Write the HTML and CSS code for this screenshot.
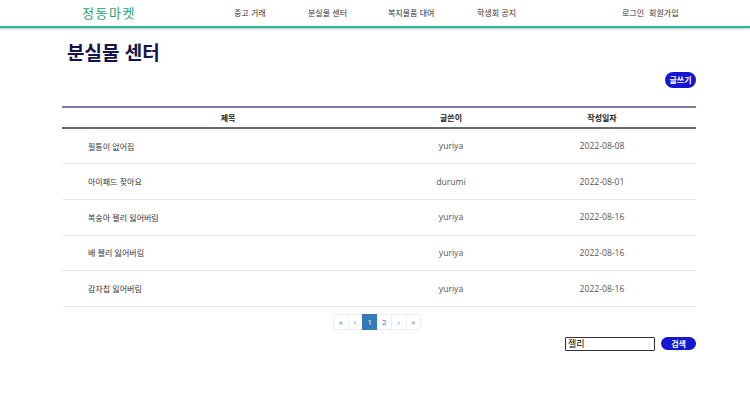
FILE: index.html
```html
<!DOCTYPE html>
<html lang="ko">
<head>
<meta charset="utf-8">
<link rel="stylesheet" href="styles.css">
</head>
<body>
<header class="header">
  <div class="logo">정동마켓</div>
  <nav class="nav">
    <a>중고 거래</a>
    <a>분실물 센터</a>
    <a>복지물품 대여</a>
    <a>학생회 공지</a>
  </nav>
  <div class="auth"><a>로그인</a><a>회원가입</a></div>
</header>
<main class="main">
  <h1 class="title">분실물 센터</h1>
  <div class="toolbar"><button class="btn write">글쓰기</button></div>
  <table class="board">
    <thead>
      <tr><th class="c-title">제목</th><th class="c-author">글쓴이</th><th class="c-date">작성일자</th></tr>
    </thead>
    <tbody>
      <tr><td class="t">필통이 없어짐</td><td>yuriya</td><td>2022-08-08</td></tr>
      <tr><td class="t">아이패드 찾아요</td><td>durumi</td><td>2022-08-01</td></tr>
      <tr><td class="t">복숭아 젤리 잃어버림</td><td>yuriya</td><td>2022-08-16</td></tr>
      <tr><td class="t">배 젤리 잃어버림</td><td>yuriya</td><td>2022-08-16</td></tr>
      <tr><td class="t">감자칩 잃어버림</td><td>yuriya</td><td>2022-08-16</td></tr>
    </tbody>
  </table>
  <div class="pager">
    <span class="pg">«</span><span class="pg">‹</span><span class="pg active">1</span><span class="pg">2</span><span class="pg">›</span><span class="pg">»</span>
  </div>
  <div class="search">
    <input class="search-input" type="text" value="젤리">
    <button class="btn search-btn">검색</button>
  </div>
</main>
</body>
</html>
```
FILE: styles.css
```css
* { box-sizing: border-box; }
body {
  margin: 0;
  font-family: "Noto Sans CJK KR", "Noto Sans", sans-serif;
  background: #fff;
  color: #333;
}
.header {
  height: 28px;
  display: flex;
  align-items: center;
  border-bottom: 2px solid #2bb99c;
  box-shadow: 0 1px 2px rgba(0,0,0,0.25);
  padding-bottom: 1px;
}
.logo {
  margin-left: 82px;
  width: 152px;
  font-size: 13px;
  font-weight: 400;
  letter-spacing: 1.5px;
  color: #2a9f73;
}
.nav { display: flex; font-size: 8px; color: #333; }
.nav a:nth-child(1) { width: 74px; }
.nav a:nth-child(2) { width: 80px; }
.nav a:nth-child(3) { width: 89px; }
.nav a:nth-child(4) { width: 145px; }
.auth { display: flex; gap: 5px; font-size: 8px; color: #333; }
.main { padding: 0 54px 0 62px; }
.title {
  margin: 10px 0 0 5px;
  font-size: 19px;
  font-weight: 700;
  color: #14144a;
  line-height: 28px;
}
.toolbar { display: flex; justify-content: flex-end; margin-top: 6px; }
.btn {
  border: none;
  background: #1717d2;
  color: #fff;
  font-family: "Noto Sans CJK KR", sans-serif;
  font-weight: 700;
  border-radius: 8px;
  padding: 0;
}
.write { width: 31px; height: 16px; font-size: 8px; line-height: 16px; }
.board {
  width: 100%;
  margin-top: 18px;
  border-collapse: collapse;
  font-size: 8px;
}
.board thead tr { border-top: 2px solid #7b7ba3; border-bottom: 2px solid #6a6a6a; }
.board th { height: 21px; font-weight: 700; color: #222; padding: 0; }
.c-title { width: 332px; }
.c-author { width: 114px; }
.board td {
  height: 35.7px;
  text-align: center;
  padding: 0;
  color: #444;
  border-bottom: 1px solid #eaeaea;
}
.board td.t { text-align: left; padding-left: 26px; color: #333; }
.board td:not(.t) { font-family: "Open Sans", "Noto Sans CJK KR", sans-serif; font-size: 8.6px; color: #555; }
.pager { display: flex; justify-content: center; margin-top: 7px; padding-right: 3px; }
.pg {
  width: 15.5px;
  height: 16px;
  border: 1px solid #eee;
  margin-left: -1px;
  font-size: 8px;
  line-height: 14px;
  text-align: center;
  color: #337ab7;
  font-family: "Open Sans", sans-serif;
}
.pg:first-child { border-radius: 2px 0 0 2px; }
.pg:last-child { border-radius: 0 2px 2px 0; }
.pg.active { background: #337ab7; border-color: #337ab7; color: #fff; }
.search { display: flex; justify-content: flex-end; align-items: center; gap: 6px; margin-top: 7px; }
.search-input {
  width: 90px;
  height: 14px;
  border: 1px solid #333;
  border-radius: 1px;
  font-size: 9px;
  padding: 0 2px;
  font-family: "Noto Sans CJK KR", sans-serif;
  color: #000;
}
.search-btn { width: 35px; height: 13px; font-size: 8px; line-height: 13px; border-radius: 7px; }
```
